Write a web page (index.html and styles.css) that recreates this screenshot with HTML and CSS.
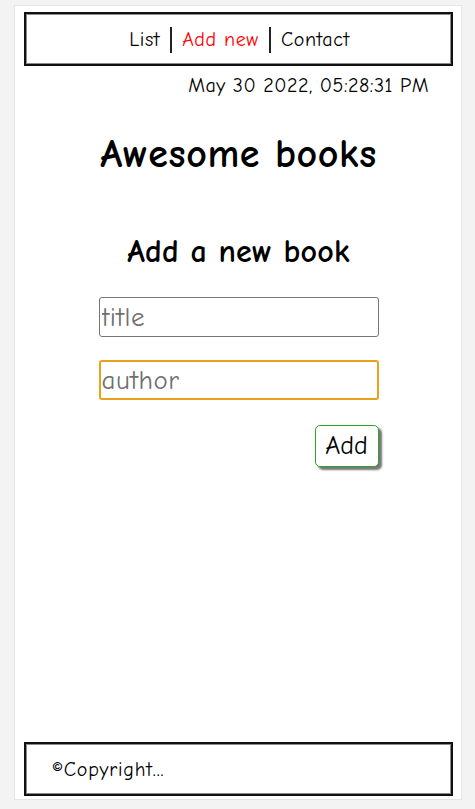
FILE: index.html
```html
<!DOCTYPE html>
<html lang="en">
<head>
<meta charset="utf-8">
<title>Awesome books</title>
<link rel="stylesheet" href="styles.css">
</head>
<body>
<div class="page">
  <nav class="nav">
    <a class="nav-link" href="#">List</a>
    <a class="nav-link active sep" href="#">Add new</a>
    <a class="nav-link sep" href="#">Contact</a>
  </nav>
  <p class="date">May 30 2022, 05:28:31 PM</p>
  <main class="main">
    <h1 class="title">Awesome books</h1>
    <h2 class="subtitle">Add a new book</h2>
    <form class="form">
      <input class="field" type="text" placeholder="title">
      <input class="field focused" type="text" placeholder="author">
      <div class="actions"><button class="btn" type="button">Add</button></div>
    </form>
  </main>
  <footer class="footer">©Copyright...</footer>
</div>
</body>
</html>
```

FILE: styles.css
```css
* { box-sizing: border-box; }
html, body { margin: 0; padding: 0; }
body {
  background: #f2f3f2;
  font-family: "Comic Sans MS", "Comic Neue", cursive, sans-serif;
  color: #000;
}
.page {
  margin: 5px 13px 0 14px;
  height: 795px;
  background: #fff;
  border: 1px solid #e4e6e4;
  padding: 6px 8px 3px 9px;
  display: flex;
  flex-direction: column;
}
.nav {
  height: 54px;
  border: 2px solid #111;
  box-shadow: inset 0 0 0 1px #8a8a8a;
  display: flex;
  align-items: center;
  justify-content: center;
  padding-left: 2px;
  padding-top: 2px;
}
.nav-link {
  font-size: 20px;
  letter-spacing: 0.6px;
  color: #000;
  text-decoration: none;
  line-height: 26px;
  padding: 0 10px;
}
.nav-link.sep { border-left: 2px solid #222; }
.nav-link.active { color: #ff0000; }
.date {
  margin: 7px 0 0;
  text-align: right;
  padding-right: 24px;
  font-size: 20px;
  letter-spacing: 0.5px;
  line-height: 26px;
}
.main {
  display: flex;
  flex-direction: column;
  align-items: center;
}
.title {
  margin: 28px 0 0;
  font-size: 40px;
  letter-spacing: 0.6px;
  line-height: 54px;
  font-weight: bold;
}
.subtitle {
  margin: 50px 0 0;
  font-size: 32px;
  letter-spacing: 0.2px;
  line-height: 42px;
  font-weight: bold;
}
.form {
  width: 280px;
  margin-top: 24px;
  display: flex;
  flex-direction: column;
  gap: 23px;
}
.field {
  width: 280px;
  height: 40px;
  border: 1px solid #767676;
  border-radius: 3px;
  padding: 0 2px;
  font-family: inherit;
  font-size: 27px;
  letter-spacing: 0.5px;
  color: #333;
  outline: none;
}
.field::placeholder { color: #6f6f6f; }
.field.focused {
  border: 2px solid #e8a21c;
  padding: 0 1px;
}
.actions {
  display: flex;
  justify-content: flex-end;
  margin-top: 2px;
}
.btn {
  width: 64px;
  height: 42px;
  background: #fff;
  border: 1px solid #2ba52b;
  border-radius: 5px;
  box-shadow: 3px 3px 2px #777;
  font-family: inherit;
  font-size: 26px;
  color: #000;
  padding: 0;
}
.footer {
  margin-top: auto;
  height: 54px;
  border: 2px solid #111;
  box-shadow: inset 0 0 0 1px #8a8a8a;
  display: flex;
  align-items: center;
  padding-left: 26px;
  font-size: 20px;
  letter-spacing: 0.8px;
}
```
